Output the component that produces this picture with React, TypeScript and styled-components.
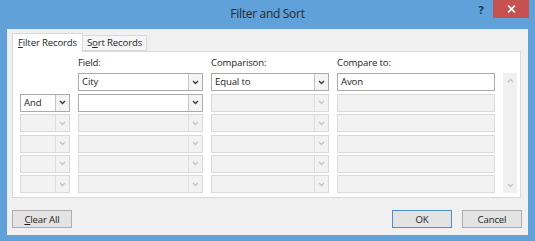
import React from "react";
import styled, { createGlobalStyle } from "styled-components";

const Global = createGlobalStyle`
  html, body { margin: 0; padding: 0; background: #ffffff; }
  body { font-family: "Open Sans", "Noto Sans", sans-serif; }
`;

const Window = styled.div`
  width: 535px;
  height: 241px;
  background: #60a1d9;
  display: flex;
  flex-direction: column;
  box-sizing: border-box;
`;

const TitleBar = styled.div`
  height: 29px;
  display: grid;
  grid-template-columns: 1fr auto 1fr;
  align-items: start;
  flex: none;
`;

const Title = styled.div`
  grid-column: 2;
  font-size: 12px;
  letter-spacing: -0.3px;
  color: #2a2a2a;
  line-height: 28px;
`;

const TitleButtons = styled.div`
  grid-column: 3;
  display: flex;
  justify-content: flex-end;
  align-items: flex-start;
  padding-right: 6px;
`;

const HelpButton = styled.div`
  width: 24px;
  height: 18px;
  font-size: 11px;
  font-weight: 700;
  color: #1c2f4a;
  display: flex;
  align-items: center;
  justify-content: center;
`;

const CloseButton = styled.div`
  width: 36px;
  height: 18px;
  background: #c75050;
  display: flex;
  align-items: center;
  justify-content: center;
`;

const Body = styled.div`
  flex: 1;
  margin: 0 7px 6px 7px;
  background: #f0f0f0;
  padding: 4px 6px 0 5px;
  display: flex;
  flex-direction: column;
  font-size: 9.6px;
  letter-spacing: -0.15px;
  color: #262626;
`;

const TabList = styled.div`
  display: flex;
  align-items: flex-end;
  height: 18px;
  position: relative;
  z-index: 1;
`;

const Tab = styled.div<{ $active?: boolean }>`
  box-sizing: border-box;
  height: ${(p) => (p.$active ? 19 : 16)}px;
  width: ${(p) => (p.$active ? 71 : 64)}px;
  text-align: center;
  margin-bottom: ${(p) => (p.$active ? -1 : 0)}px;
  background: ${(p) => (p.$active ? "#ffffff" : "#f5f5f5")};
  border: 1px solid #d9d9d9;
  border-bottom: ${(p) => (p.$active ? "none" : "1px solid #d9d9d9")};
  ${(p) => (p.$active ? "" : "border-left: none;")}
  line-height: ${(p) => (p.$active ? 17 : 14)}px;
  white-space: nowrap;
`;

const U = styled.span`
  text-decoration: underline;
  text-underline-offset: 1px;
`;

const Panel = styled.div`
  height: 147px;
  box-sizing: border-box;
  background: #ffffff;
  border: 1px solid #d9d9d9;
  margin-right: 1px;
  padding: 5px 0 0 7px;
  display: grid;
  grid-template-columns: 50px 125px 118px 158px 14px;
  grid-template-rows: 14px repeat(6, 18px);
  column-gap: 8px;
  row-gap: 2.4px;
  align-content: start;
`;

const Label = styled.div<{ $col: number }>`
  grid-column: ${(p) => p.$col};
  grid-row: 1;
  line-height: 12px;
  align-self: start;
`;

const Combo = styled.div<{ $disabled?: boolean; $col: number; $row: number }>`
  grid-column: ${(p) => p.$col};
  grid-row: ${(p) => p.$row};
  box-sizing: border-box;
  display: flex;
  background: ${(p) => (p.$disabled ? "#f2f2f2" : "#ffffff")};
  border: 1px solid ${(p) => (p.$disabled ? "#d9d9d9" : "#ababab")};
`;

const ComboText = styled.div`
  flex: 1;
  color: #1e1e1e;
  padding-left: 3px;
  line-height: 16px;
  white-space: nowrap;
  overflow: hidden;
`;

const ComboArrow = styled.div<{ $disabled?: boolean }>`
  width: 13px;
  border-left: 1px solid ${(p) => (p.$disabled ? "#dedede" : "#c6c6c6")};
  background: ${(p) => (p.$disabled ? "#f2f2f2" : "#f4f4f4")};
  display: flex;
  align-items: center;
  justify-content: center;
`;

const TextBox = styled.div<{ $disabled?: boolean; $row: number }>`
  grid-column: 4;
  grid-row: ${(p) => p.$row};
  box-sizing: border-box;
  background: ${(p) => (p.$disabled ? "#f2f2f2" : "#ffffff")};
  border: 1px solid ${(p) => (p.$disabled ? "#d9d9d9" : "#ababab")};
  color: #1e1e1e;
  padding-left: 3px;
  line-height: 16px;
`;

const ScrollBar = styled.div`
  grid-column: 5;
  grid-row: 2 / span 6;
  background: #f0f0f0;
  display: flex;
  flex-direction: column;
  justify-content: space-between;
  align-items: center;
  padding: 5px 0;
`;

const Footer = styled.div`
  display: flex;
  justify-content: space-between;
  margin-top: 12px;
`;

const ButtonGroup = styled.div`
  display: flex;
  gap: 10px;
`;

const Button = styled.div<{ $default?: boolean }>`
  width: 60px;
  height: 18px;
  box-sizing: border-box;
  background: #e3e3e3;
  border: 1px solid ${(p) => (p.$default ? "#4a90d0" : "#adadad")};
  color: #1e1e1e;
  display: flex;
  align-items: center;
  justify-content: center;
`;

const Chevron = ({ color, up }: { color: string; up?: boolean }) => (
  <svg width="7" height="5" viewBox="0 0 7 5">
    <polyline
      points={up ? "1,4 3.5,1.5 6,4" : "1,1 3.5,3.5 6,1"}
      fill="none"
      stroke={color}
      strokeWidth="1.3"
    />
  </svg>
);

type ComboProps = { col: number; row: number; text?: string; disabled?: boolean };

const ComboBox = ({ col, row, text, disabled }: ComboProps) => (
  <Combo $col={col} $row={row} $disabled={disabled}>
    <ComboText>{text}</ComboText>
    <ComboArrow $disabled={disabled}>
      <Chevron color={disabled ? "#c4c4c4" : "#3a3a3a"} />
    </ComboArrow>
  </Combo>
);

export default function App() {
  const rows = [2, 3, 4, 5, 6, 7];
  return (
    <>
      <Global />
      <Window>
        <TitleBar>
          <Title>Filter and Sort</Title>
          <TitleButtons>
            <HelpButton>?</HelpButton>
            <CloseButton>
              <svg width="9" height="8" viewBox="0 0 9 8">
                <path d="M1 0.5 L8 7.5 M8 0.5 L1 7.5" stroke="#ffffff" strokeWidth="1.6" />
              </svg>
            </CloseButton>
          </TitleButtons>
        </TitleBar>
        <Body>
          <TabList>
            <Tab $active>
              <U>F</U>ilter Records
            </Tab>
            <Tab>
              S<U>o</U>rt Records
            </Tab>
          </TabList>
          <Panel>
            <Label $col={2}>Field:</Label>
            <Label $col={3}>Comparison:</Label>
            <Label $col={4}>Compare to:</Label>
            {rows.map((r) => (
              <React.Fragment key={r}>
                {r > 2 && <ComboBox col={1} row={r} text={r === 3 ? "And" : ""} disabled={r > 3} />}
                <ComboBox col={2} row={r} text={r === 2 ? "City" : ""} disabled={r > 3} />
                <ComboBox col={3} row={r} text={r === 2 ? "Equal to" : ""} disabled={r > 2} />
                <TextBox $row={r} $disabled={r > 2}>
                  {r === 2 ? "Avon" : ""}
                </TextBox>
              </React.Fragment>
            ))}
            <ScrollBar>
              <Chevron color="#c4c4c4" up />
              <Chevron color="#c4c4c4" />
            </ScrollBar>
          </Panel>
          <Footer>
            <Button>
              <U>C</U>lear All
            </Button>
            <ButtonGroup>
              <Button $default>OK</Button>
              <Button>Cancel</Button>
            </ButtonGroup>
          </Footer>
        </Body>
      </Window>
    </>
  );
}
